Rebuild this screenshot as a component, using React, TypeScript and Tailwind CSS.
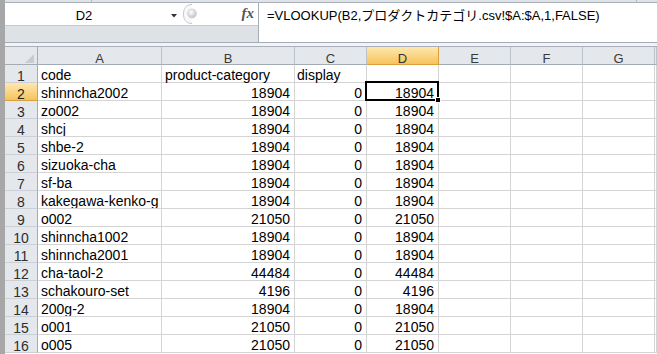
import React from "react";

const columns = ["A", "B", "C", "D", "E", "F", "G", ""];

const rows = [
  ["code", "product-category", "display", ""],
  ["shinncha2002", "18904", "0", "18904"],
  ["zo002", "18904", "0", "18904"],
  ["shcj", "18904", "0", "18904"],
  ["shbe-2", "18904", "0", "18904"],
  ["sizuoka-cha", "18904", "0", "18904"],
  ["sf-ba", "18904", "0", "18904"],
  ["kakegawa-kenko-g", "18904", "0", "18904"],
  ["o002", "21050", "0", "21050"],
  ["shinncha1002", "18904", "0", "18904"],
  ["shinncha2001", "18904", "0", "18904"],
  ["cha-taol-2", "44484", "0", "44484"],
  ["schakouro-set", "4196", "0", "4196"],
  ["200g-2", "18904", "0", "18904"],
  ["o001", "21050", "0", "21050"],
  ["o005", "21050", "0", "21050"],
];

const cellBase = "h-[18px] border-r border-b border-[#d4d4d4] text-[14px] leading-[16px] pt-[2px] whitespace-nowrap";

const Grip = () => (
  <svg width="15" height="20" viewBox="0 0 15 20" className="ml-[6px] mt-[1px]">
    <defs>
      <radialGradient id="knob" cx="40%" cy="35%" r="70%">
        <stop offset="0%" stopColor="#ffffff" />
        <stop offset="100%" stopColor="#b9bec5" />
      </radialGradient>
    </defs>
    <path d="M9 0.5 C3 0.5 0.5 4.5 0.5 10 C0.5 15.5 3 19.5 9 19.5" fill="#f7f8f9" stroke="#c3c8ce" />
    <circle cx="9" cy="9.5" r="4.5" fill="url(#knob)" stroke="#c9cdd2" strokeWidth="0.6" />
  </svg>
);

const App = () => {
  return (
    <div className="flex h-[354px] w-[657px] overflow-hidden bg-white text-black font-['Liberation_Sans','Noto_Sans_CJK_JP',sans-serif]">
      <div className="w-[5px] shrink-0 bg-[#a7a7a7]" />
      <div className="flex min-w-0 flex-1 flex-col">
        {/* ribbon edge */}
        <div className="flex h-[3px] shrink-0 border-b border-[#a9b0b9] bg-[#dfe3e8]">
          <div className="w-[87px] border-r border-[#b7bec7]" />
          <div className="w-[545px] border-r border-[#b7bec7]" />
        </div>

        {/* FORMULA BAR */}
        <div className="flex h-[40px] shrink-0 border-b border-[#a5acb5]">
          <div className="flex w-[254px] flex-col border-r border-[#a5acb5]">
            <div className="flex h-[23px] items-start border-b border-[#c6cbd1] bg-white">
              <div className="w-[158px] pt-[6px] text-center text-[13px] leading-[13px]">D2</div>
              <svg width="6" height="4" viewBox="0 0 6 4" className="ml-[8px] mt-[11px]">
                <polygon points="0,0 6,0 3,3.5" fill="#333" />
              </svg>
              <Grip />
              <div className="ml-auto pr-[4px] pt-[2px] font-['Liberation_Serif',serif] text-[15px] font-bold italic leading-[16px] text-[#555]">
                fx
              </div>
            </div>
            <div className="flex-1 bg-[#dee1e6]" />
          </div>
          <div className="flex-1 bg-white pl-[8px] pt-[5px] text-[13px] leading-[16px] whitespace-nowrap">
            =VLOOKUP(B2,プロダクトカテゴリ.csv!$A:$A,1,FALSE)
          </div>
        </div>
        <div className="h-[4px] shrink-0 border-b border-[#a9b0b9] bg-[#f2f3f5]" />

        {/* GRID */}
        <div className="grid grid-cols-[33px_124px_133px_72px_72px_72px_72px_72px_1fr] auto-rows-[18px]">
          <div className="flex items-end justify-end border-r border-b border-[#a3abb5] bg-[#e4e7eb] pr-[3px] pb-[1px]">
            <svg width="9" height="9" viewBox="0 0 9 9">
              <polygon points="9,0 9,9 0,9" fill="#c8ccd1" />
            </svg>
          </div>
          {columns.map((c) =>
            c === "D" ? (
              <div
                key={c}
                className="border-r border-b border-[#dc9f3c] bg-linear-to-b from-[#fde8ad] to-[#f6c35a] pt-[5px] text-center text-[13px] leading-[13px] text-[#333]"
              >
                {c}
              </div>
            ) : (
              <div
                key={c || "H"}
                className="border-r border-b border-r-[#bcc2ca] border-b-[#a3abb5] bg-[#e4e7eb] pt-[5px] text-center text-[13px] leading-[13px] text-[#3a3a3a]"
              >
                {c}
              </div>
            )
          )}

          {rows.map((r, i) => {
            const n = i + 1;
            const header = n === 2;
            return (
              <React.Fragment key={n}>
                <div
                  className={
                    header
                      ? "border-r border-b border-[#dc9f3c] bg-linear-to-b from-[#fde8ad] to-[#f6c35a] pt-[3px] text-center text-[14px] leading-[16px] text-[#222]"
                      : "border-r border-b border-r-[#a3abb5] border-b-[#cbd0d6] bg-[#e4e7eb] pt-[3px] text-center text-[14px] leading-[16px] text-[#2e2e2e]"
                  }
                >
                  {n}
                </div>
                <div className={`${cellBase} overflow-hidden pl-[3px]`}>{r[0]}</div>
                {n === 1 ? (
                  <>
                    <div className={`${cellBase} pl-[3px]`}>{r[1]}</div>
                    <div className={`${cellBase} pl-[2px]`}>{r[2]}</div>
                    <div className={cellBase} />
                  </>
                ) : (
                  <>
                    <div className={`${cellBase} pr-[4px] text-right`}>{r[1]}</div>
                    <div className={`${cellBase} pr-[4px] text-right`}>{r[2]}</div>
                    <div className={`${cellBase} relative pr-[4px] text-right`}>
                      {r[3]}
                      {header && (
                        <div className="absolute -top-[2px] -left-[2px] -right-[1px] -bottom-[1px] z-10 border-2 border-black">
                          <div className="absolute -right-[4px] -bottom-[4px] h-[6px] w-[6px] border border-white bg-black" />
                        </div>
                      )}
                    </div>
                  </>
                )}
                <div className={cellBase} />
                <div className={cellBase} />
                <div className={cellBase} />
                <div className={cellBase} />
              </React.Fragment>
            );
          })}
        </div>
      </div>
    </div>
  );
};

export default App;
